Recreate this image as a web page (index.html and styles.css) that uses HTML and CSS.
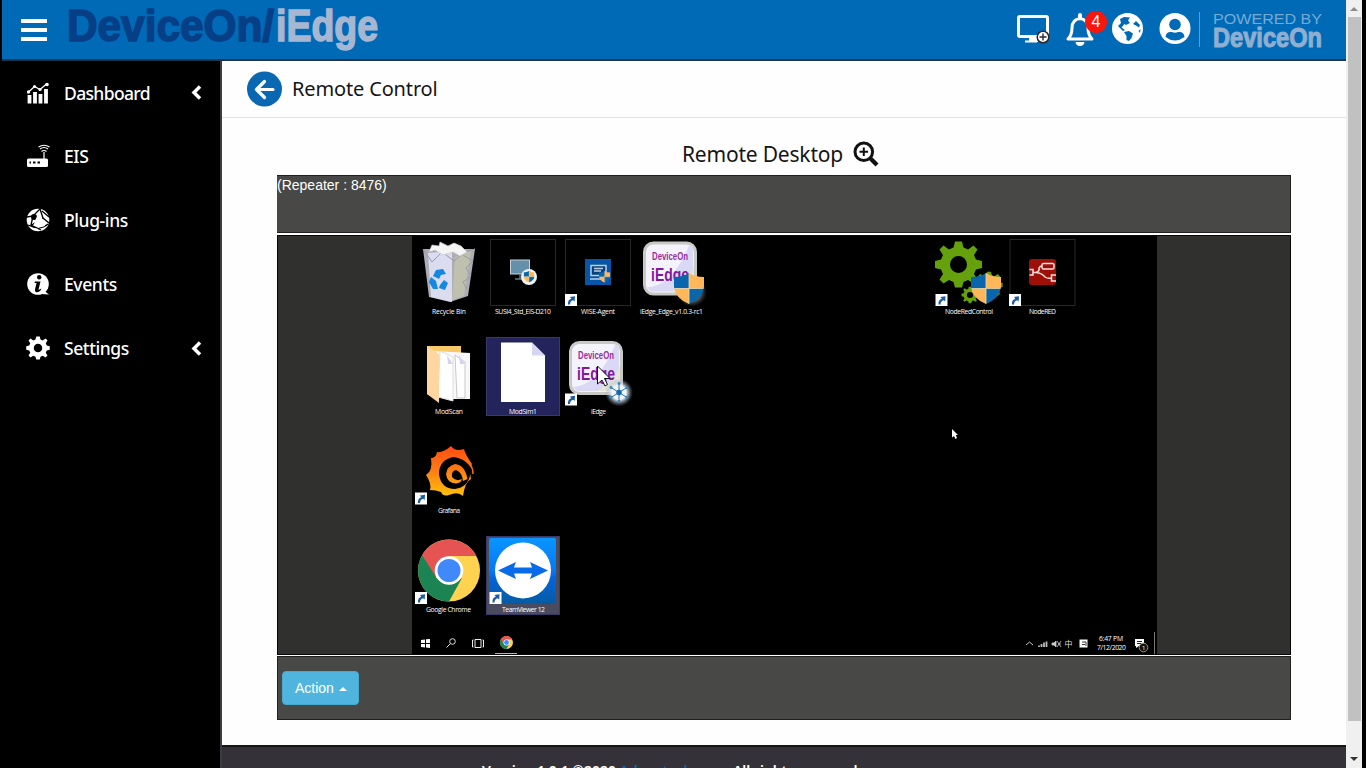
FILE: index.html
```html
<!DOCTYPE html>
<html lang="en">
<head>
<meta charset="utf-8">
<title>DeviceOn/iEdge - Remote Control</title>
<link rel="stylesheet" href="styles.css">
</head>
<body>
<svg class="defs" width="0" height="0" aria-hidden="true">
  <defs>
    <clipPath id="shieldclip"><path d="M0 4Q9 4 15 0Q21 4 30 4V14Q29 25 15 31Q1 25 0 14Z"/></clipPath>
    <g id="shield"><g clip-path="url(#shieldclip)"><rect width="15" height="15.5" fill="#0966ac"/><rect x="15" width="15" height="15.5" fill="#ffb75a"/><rect y="15.5" width="15" height="16" fill="#ffb75a"/><rect x="15" y="15.5" width="15" height="16" fill="#0966ac"/><path d="M15 0V31M0 15.5H30" stroke="#e9d9b0" stroke-width=".8"/></g></g>
    <g id="shortcut"><rect width="12" height="12" fill="#fff"/><path d="M3 10.5Q2.500 6 6.300 4.800L5 3L10 2.200L9.700 7.500L8.200 6.200Q5 7 5 10.500Z" fill="#1b5ba5"/></g>
    <g id="chrome"><circle r="31" fill="#ffd34f"/><path d="M-26.800 -15.500A31 31 0 0 1 26.800 -15.500L27.500 -14.500H0L-14 8Z" fill="#e55353"/><path d="M-26.800 -15.500A31 31 0 0 0 0 31L13 7.500L0 14L-12.500 7.500Z" fill="#1c8452"/><circle r="14.300" fill="#fff"/><circle r="11.500" fill="#4089fb"/></g>
    <linearGradient id="fire" gradientUnits="userSpaceOnUse" x1="0" y1="10" x2="0" y2="61"><stop offset="0" stop-color="#ff4a12"/><stop offset=".5" stop-color="#fc8014"/><stop offset="1" stop-color="#ffc40c"/></linearGradient>
    <linearGradient id="tv" x1="0" y1="0" x2="0" y2="1"><stop offset="0" stop-color="#0995ff"/><stop offset=".5" stop-color="#0678f4"/><stop offset=".61" stop-color="#0564d8"/><stop offset="1" stop-color="#065ba2"/></linearGradient>
    <radialGradient id="glow"><stop offset=".5" stop-color="#f0f6fa"/><stop offset="1" stop-color="#8795aa" stop-opacity="0"/></radialGradient>
    <g id="iedge"><rect x="1.500" y="1.500" width="51" height="51" rx="9" fill="#f4f3fc" stroke="#c8c8c4" stroke-width="3"/><path d="M4 46Q30 44 46 4H50V50H8Z" fill="#d9d9f6"/><path d="M28 50Q46 40 51 24V50Z" fill="#e7e5d8"/><text x="9" y="18" textLength="36" lengthAdjust="spacingAndGlyphs" class="tile-small">DeviceOn</text><text x="8" y="39" textLength="38" lengthAdjust="spacingAndGlyphs" class="tile-large">iEdge</text></g>
    <path id="cog" d="M-3.500 -23H3.500L5 -17L9.500 -15L15 -19L19 -15L15.500 -9.500L17.500 -5L23.500 -3.500V3.500L17.500 5L15.500 9.500L19 15L15 19L9.500 15.500L5 17.500L3.500 23H-3.500L-5 17.500L-9.500 15.500L-15 19L-19 15L-15.500 9.500L-17.500 5L-23.500 3.500V-3.500L-17.500 -5L-15.500 -9.500L-19 -15L-15 -19L-9.500 -15L-5 -17ZM0 -8.500A8.500 8.500 0 1 0 0 8.500A8.500 8.500 0 1 0 0 -8.500Z" fill-rule="evenodd"/>
  </defs>
</svg>
<div class="app">
  <div class="page">
    <header class="topbar">
      <svg class="menu" width="26" height="24" viewBox="0 0 26 24"><path d="M0 3H26M0 12H26M0 21H26" stroke="#fff" stroke-width="4"/></svg>
      <svg class="logo" width="316" height="59" viewBox="0 0 316 59"><text x="1" y="41" textLength="207" lengthAdjust="spacingAndGlyphs" fill="#063f86">DeviceOn/</text><text x="210" y="41" textLength="102" lengthAdjust="spacingAndGlyphs" fill="#a7b6d1">iEdge</text></svg>
      <nav class="tools">
        <svg width="33" height="32" viewBox="0 0 33 32"><path d="M8 28.500H20M13 24H20V28H13Z" stroke="#fff" stroke-width="2" fill="#fff"/><rect x="1.500" y="3.500" width="29" height="20" rx="1.500" fill="none" stroke="#fff" stroke-width="3"/><circle cx="26" cy="24" r="5.800" fill="#fff" stroke="#282832" stroke-width="1.500"/><path d="M22.500 24H29.500M26 20.500V27.500" stroke="#282832" stroke-width="1.400"/></svg>
        <div class="bell">
          <svg width="28" height="34" viewBox="0 0 28 34"><path d="M14 2V5" stroke="#fff" stroke-width="4" stroke-linecap="round"/><path d="M2 26H26Q22 22 22 15Q22 6.500 14 5.500Q6 6.500 6 15Q6 22 2 26Z" fill="none" stroke="#fff" stroke-width="3" stroke-linejoin="round"/><path d="M9.500 29H18.500Q18 33 14 33Q10 33 9.500 29Z" fill="#fff"/></svg>
          <span class="badge">4</span>
        </div>
        <svg width="32" height="32" viewBox="0 0 32 32"><circle cx="15.500" cy="15.500" r="15.500" fill="#fff"/><path d="M8 6L12 4L18 4.500L16 7.500L18 10L14 12L12.500 11L9.500 14.500L13 17L11 18L6 13L9 10ZM24 8L28 12L27 14.500L24 12.500L21 11ZM12 19L17 18L21 20.500L19.500 25L17 28L14.500 27L14.500 23ZM26.500 18L28.500 16L28 20Z" fill="#006ab7"/></svg>
        <svg width="32" height="32" viewBox="0 0 32 32"><circle cx="16" cy="15.500" r="15.500" fill="#fff"/><circle cx="16" cy="11.500" r="5.800" fill="#006ab7"/><path d="M6.500 24Q7 19 11.500 19H13Q16 20.500 19 19H20.500Q25 19 25.500 24Q16 31 6.500 24Z" fill="#006ab7"/></svg>
      </nav>
      <svg class="powered" width="128" height="42" viewBox="0 0 128 42"><path d="M.5 1V36" stroke="#5c9fcd"/><text class="by" x="14" y="13" textLength="109" lengthAdjust="spacingAndGlyphs">POWERED BY</text><text class="brand" x="14" y="36" textLength="109" lengthAdjust="spacingAndGlyphs">DeviceOn</text></svg>
    </header>
    <div class="body">
      <aside class="sidebar">
        <a class="nav-item dashboard"><svg class="nav-icon" viewBox="0 0 24 24"><path d="M3.500 22.500V14M9 22.500V11M14.500 22.500V13M20 22.500V8" stroke="#fff" stroke-width="3.800"/><path d="M2 11.500L8.500 5.500L14 8.500L20.500 3" fill="none" stroke="#fff" stroke-width="1.300"/><circle cx="2.500" cy="11" r="1.700" fill="#fff"/><circle cx="8.500" cy="5.500" r="1.600" fill="#fff"/><circle cx="14" cy="8.500" r="1.600" fill="#fff"/><circle cx="21" cy="3.500" r="1.800" fill="#fff"/></svg><span>Dashboard</span><svg class="chevron" width="11" height="15" viewBox="0 0 11 15"><path d="M9 1.500L3 7.500L9 13.500" fill="none" stroke="#fff" stroke-width="3.500"/></svg></a>
        <a class="nav-item"><svg class="nav-icon" viewBox="0 0 24 24"><rect x="1" y="14.500" width="21" height="8.500" rx="1.500" fill="#fff"/><path d="M18 15V8M15.500 7.500Q18 5.500 20.500 7.500M14 5Q18 2 22 5M12.500 3Q18 -.5 23.500 3" fill="none" stroke="#fff" stroke-width="1.200"/><path d="M3.500 18.500H5M7 18.500H9.500M11.500 18.500H14" stroke="#000" stroke-width="2"/></svg><span>EIS</span></a>
        <a class="nav-item"><svg class="nav-icon" viewBox="0 0 24 24"><circle cx="12" cy="12" r="11.300" fill="#fff"/><path d="M1 9L7 8L14 1M14 1L17 10L23 15M7 8L5 17L15 22M2 17Q14 23 22 16M16 3L23 9M4 18L17 10" fill="none" stroke="#000" stroke-width="1.300"/><circle cx="8" cy="9" r="3" fill="#000"/><path d="M8 16L11 8L16 10L19 18L12 20Z" fill="#fff"/></svg><span>Plug-ins</span></a>
        <a class="nav-item"><svg class="nav-icon" viewBox="0 0 24 24"><circle cx="12" cy="12" r="10.800" fill="#fff"/><path d="M17 18L23 22.500L15 22Z" fill="#fff"/><circle cx="13.200" cy="5.200" r="2.200" fill="#000"/><path d="M9 9.500H14.500L12.500 17.500Q13 18 15.500 16.500Q14 20.500 10.500 20.300Q8.500 20 9 17.500L10.500 11H8.500Z" fill="#000"/></svg><span>Events</span></a>
        <a class="nav-item"><svg class="nav-icon" viewBox="-24 -24 48 48"><use href="#cog" fill="#fff"/></svg><span>Settings</span><svg class="chevron" width="11" height="15" viewBox="0 0 11 15"><path d="M9 1.500L3 7.500L9 13.500" fill="none" stroke="#fff" stroke-width="3.500"/></svg></a>
      </aside>
      <main class="main">
        <div class="titlebar">
          <svg width="36" height="36" viewBox="0 0 36 36"><circle cx="17.500" cy="18" r="17.500" fill="#0a68b2"/><path d="M26 18.500H10M17.500 10.500L9.500 18.500L17.500 26.500" fill="none" stroke="#fff" stroke-width="3.200" stroke-linecap="round" stroke-linejoin="round"/></svg>
          <h1>Remote Control</h1>
        </div>
        <section class="content">
          <div class="heading"><h2>Remote Desktop</h2><svg width="26" height="26" viewBox="0 0 26 26"><circle cx="10.800" cy="10.800" r="8.800" fill="none" stroke="#111" stroke-width="3"/><path d="M17.500 17.500L24 24" stroke="#111" stroke-width="4.200"/><path d="M6.500 10.800H15.100M10.800 6.500V15.100" stroke="#111" stroke-width="2"/></svg></div>
          <div class="viewer">
            <div class="status">(Repeater : 8476)</div>
            <div class="screen">
              <div class="desktop">
                <div class="icons">
                  <svg class="cell c1 r1" viewBox="0 0 74 79"><path d="M11 12L63 12L56 59L38 65L17 60Z" fill="#adadb7"/><path d="M16 16L40 14L40 65L19 60Z" fill="#dcdcf0"/><path d="M43 20L59 14L52 59L40 63Z" fill="#bfc0ad"/><path d="M51 18L61 24L54 31L59 39L51 45L55 52M11 12L20 25L30 15L42 24L53 15L63 12" fill="none" stroke="#9b9ba5" stroke-width="1"/><path d="M17 15L20 8L27 9L28 5L36 9L42 6L49 9L55 15L48 19L41 15L31 18L23 13Z" fill="#f5f5f5" stroke="#c7c7cf" stroke-width=".7"/><path d="M21 39L24 33L31 32L34 37L29 38L27 42ZM17 45L19 40L24 44L26 52L21 52ZM28 48L32 43L36 46L33 53L27 51Z" fill="#1688df"/><text x="20" y="77" textLength="34">Recycle Bin</text></svg>
                  <svg class="cell c2 r1" viewBox="0 0 74 79"><rect class="frame" x="4.500" y="2.500" width="65" height="66"/><rect x="24.500" y="23" width="19" height="14" fill="#6590ab" stroke="#c4d0d6"/><path d="M34 38V42M29 42H38" stroke="#678" stroke-width="1.500"/><circle cx="43" cy="40" r="8" fill="#eef2f3"/><use href="#shield" transform="translate(37.500 34) scale(.37)"/><text x="9" y="77" textLength="56">SUSI4_Std_EIS-D210</text></svg>
                  <svg class="cell c3 r1" viewBox="0 0 74 79"><rect class="frame" x="4.500" y="2.500" width="65" height="66"/><rect x="24" y="22" width="26" height="26" fill="#0854a6"/><rect x="30" y="28.500" width="15" height="10" fill="#07407d" stroke="#b9d1e8" stroke-width="1.500"/><path d="M33 31.500H42M33 34H40M29 42H43" stroke="#b9d1e8" stroke-width="1.300"/><use href="#shield" transform="translate(38 34) scale(.38)"/><use href="#shortcut" x="4" y="57"/><text x="20" y="77" textLength="34">WISE-Agent</text></svg>
                  <svg class="cell c4 r1" viewBox="0 0 74 79"><use href="#iedge" x="8" y="4.500"/><circle cx="57" cy="55" r="15" fill="url(#glow)" opacity=".5"/><use href="#shield" x="39" y="36"/><text x="5" y="77" textLength="63">iEdge_Edge_v1.0.3-rc1</text></svg>
                  <svg class="cell c8 r1" viewBox="0 0 74 79"><use href="#cog" transform="translate(26.500 27.500)" fill="#64a10c"/><use href="#cog" transform="translate(38 58) scale(.36)" fill="#64a10c"/><use href="#cog" transform="translate(57 48) scale(.58)" fill="#64a10c"/><use href="#shield" x="39" y="36"/><use href="#shortcut" x="3.500" y="57"/><text x="13" y="77" textLength="48">NodeRedControl</text></svg>
                  <svg class="cell c9 r1" viewBox="0 0 74 79"><rect class="frame" x="4" y="2.500" width="65" height="66"/><rect x="23" y="22" width="27" height="26" rx="3" fill="#9c1008"/><rect x="36" y="26.500" width="12" height="5.500" rx="1.500" class="wire"/><path d="M23.500 32.500H27V38H23.500M27 35.500H30Q34 34 33 31Q34 29 36 29M30 35.500Q36 36 39 40Q42 42 45 41M50 38H45.500V44H50" class="wire"/><use href="#shortcut" x="3" y="57"/><text x="23" y="77" textLength="27">NodeRED</text></svg>
                  <svg class="cell c1 r2" viewBox="0 0 74 79"><path d="M15 9H49V60H20L15 57Z" fill="#f8c969"/><path d="M22 14L58 16V62H31Z" fill="#f8f8fb"/><path d="M28 14L41 20V64L26 60Z" fill="#fff" stroke="#ddd"/><path d="M43 18L53 25V61H45Z" fill="#fff" stroke="#bbb" stroke-width=".8"/><path d="M35 18L41 27H36ZM47 18L53 27H48Z" fill="#d5d3ef"/><path d="M15 9L27 17V66L15 57Z" fill="#ffd6a0"/><text x="23" y="77" textLength="28">ModScan</text></svg>
                  <svg class="cell selected c2 r2" viewBox="0 0 74 79"><path d="M15 5.500H46L59 18.500V65H15Z" fill="#fff"/><path d="M46 5.500L59 18.500H46Z" fill="#d7d5f0"/><text x="23" y="77" textLength="28">ModSim1</text></svg>
                  <svg class="cell c3 r2" viewBox="0 0 74 79"><use href="#iedge" x="8" y="4"/><circle cx="58" cy="55.500" r="14" fill="url(#glow)"/><path d="M58 46.500V64.500M50 50.500L66 60.500M50 60.500L66 50.500" stroke="#2470af" stroke-width="1"/><circle cx="58" cy="55.500" r="2.700" fill="#1467ae"/><g fill="#3e86bc"><circle cx="58" cy="46.500" r="1.400"/><circle cx="58" cy="64.500" r="1.400"/><circle cx="50" cy="50.500" r="1.400"/><circle cx="66" cy="60.500" r="1.400"/><circle cx="50" cy="60.500" r="1.400"/><circle cx="66" cy="50.500" r="1.400"/></g><use href="#shortcut" x="4" y="56.500"/><path d="M36.500 29V47L41 43L44 49L46.500 47.500L43.500 41.500H49Z" fill="#fff" stroke="#111"/><text x="30" y="77" textLength="15">iEdge</text></svg>
                  <svg class="cell c1 r3" viewBox="0 0 74 79"><path d="M25 16Q31 17 39 10Q43 16 52 13Q53 18 60 28Q57 32 59 43Q53 46 51 60Q46 55 37 59Q31 61 29 56Q24 54 18 54Q20 48 14 39Q21 35 19 22Q24 22 25 16Z" fill="url(#fire)"/><path d="M62 37Q55 22 41 21Q27 24 27 38Q29 53 43 53Q56 51 58 39Z" fill="#000"/><path d="M55.500 43Q53 29 43 28Q35 30 34 38Q35 47 44 47.500Q49 47 50 43Q44 46 40 41Q39 35 44 34Q50 36 51 45Z" fill="url(#fire)"/><path d="M54 24Q61 29 61 38" fill="none" stroke="#fb6f14" stroke-width="1.500"/><use href="#shortcut" x="3" y="56.500"/><text x="26" y="76.500" textLength="22">Grafana</text></svg>
                  <svg class="cell c1 r4" viewBox="0 0 74 79"><use href="#chrome" transform="translate(37 34.500)"/><use href="#shortcut" x="3" y="56"/><text x="14" y="76" textLength="45">Google Chrome</text></svg>
                  <svg class="cell selected gray c2 r4" viewBox="0 0 74 79"><rect x="3" y="2" width="67" height="66" rx="2" fill="url(#tv)"/><circle cx="37" cy="34.500" r="28" fill="#fff"/><path d="M12 34.500L30 26L28 31.500H46L44 26L62 34.500L44 43L46 37.500H28L30 43Z" fill="#0a6bea"/><use href="#shortcut" x="3.500" y="56"/><text x="16" y="76" textLength="43">TeamViewer 12</text></svg>
                </div>
                <svg class="cursor" width="8" height="12" viewBox="0 0 8 12"><path d="M1 1V9.500L3 8L4.500 11L6 10L4.800 7H7Z" fill="#fff"/></svg>
                <div class="taskbar">
                  <svg width="9" height="9" viewBox="0 0 9 9"><path d="M0 1L4 .5V4H0ZM5 .3L9 0V4H5ZM0 5H4V8.500L0 8ZM5 5H9V9L5 8.500Z" fill="#fff"/></svg>
                  <svg width="10" height="10" viewBox="0 0 10 10"><circle cx="6.500" cy="3.500" r="2.800" fill="none" stroke="#ddd"/><path d="M4.500 5.500L.5 9.500" stroke="#ddd"/></svg>
                  <svg width="12" height="9" viewBox="0 0 12 9"><path d="M3 .5H9V8.500H3ZM1.500 1H.5V8H1.500M10.500 1H11.500V8H10.500" fill="none" stroke="#eee"/></svg>
                  <span class="running"><svg width="13" height="13" viewBox="-31 -31 62 62"><use href="#chrome"/></svg></span>
                  <svg class="tray" width="130" height="22" viewBox="0 0 130 22"><path d="M1 13L4.500 10L8 13" fill="none" stroke="#ccc"/><path d="M14 15V13.500M16.500 15V12M19 15V10.500M21.500 15V9.500" stroke="#bbb" stroke-width="1.800"/><path d="M27 11H29L31 9V15L29 13H27ZM32 9L36 15M36 9L32 15M33 12H36" stroke="#ccc" stroke-width=".8" fill="#ccc"/><text x="39.500" y="14.500" class="ime">中</text><rect x="54.500" y="7.500" width="8" height="8" fill="#fff"/><path d="M57 10H61V14M57 12.500H60" stroke="#333" fill="none"/><text x="74" y="8.500" textLength="24">6:47 PM</text><text x="72" y="18" textLength="29">7/12/2020</text><path d="M110 7H119V14H114L111 16V14H110Z" fill="#fff"/><path d="M112 9.500H117M112 11.500H116" stroke="#222"/><circle cx="118.500" cy="15.500" r="4.300" fill="#111" stroke="#999966"/><text x="117" y="18" class="count">1</text><path d="M129.500 0V22" stroke="#777"/></svg>
                </div>
              </div>
            </div>
            <div class="controls"><button class="action">Action <i class="caret"></i></button></div>
          </div>
        </section>
        <footer class="footer">Version 1.0.1 ©2020 <a>Advantech.com</a>. All rights reserved</footer>
      </main>
    </div>
  </div>
  <div class="scrollbar"><i class="up"></i><div class="thumb"></div><i class="down"></i></div>
</div>
</body>
</html>
```
FILE: styles.css
```css
* { box-sizing: border-box; }
body { margin: 0; width: 1366px; height: 768px; overflow: hidden; background: #000; font-family: "Noto Sans", "Open Sans", sans-serif; }
svg { display: block; flex: none; }
.defs { position: absolute; }
.app { display: flex; height: 768px; padding: 0 4px 0 2px; }
.page { display: flex; flex-direction: column; width: 1344px; height: 768px; }
.topbar { display: flex; height: 61px; padding-left: 19px; background: #006ab7; border-bottom: 2px solid #1f344b; flex: none; }
.menu { margin-top: 18px; }
.logo { margin-left: 19px; font: 700 45px "Liberation Sans", Arial, sans-serif; }
.logo text { stroke-width: 1.600px; }
.logo text:first-child { stroke: #063f86; }
.logo text:last-child { stroke: #a7b6d1; }
.tools { display: flex; gap: 15px; margin: 13px 0 0 auto; }
.tools > svg:first-child { margin-right: 1px; }
.bell { position: relative; width: 31px; }
.badge { position: absolute; left: 19px; top: -2px; width: 22px; height: 22px; border-radius: 50%; background: #fb160d; color: #fff; font: 16px/22px "Liberation Sans", sans-serif; text-align: center; }
.powered { margin: 11px 19px 0 8px; }
.powered text { fill: #8faed0; font-family: "Liberation Sans", Arial, sans-serif; }
.powered .by { font-size: 15px; fill: #75aad4; }
.powered .brand { font-size: 28px; font-weight: 700; stroke: #8faed0; stroke-width: 1.100px; }
.body { display: flex; flex: 1; min-height: 0; }
.sidebar { width: 220px; background: #000; border-right: 2px solid #3c3c3f; flex: none; }
.nav-item { display: flex; align-items: center; height: 64px; padding: 0 18px 0 24px; color: #fff; font-size: 17.500px; font-weight: 500; line-height: 24px; letter-spacing: -.4px; }
.dashboard { height: 63px; letter-spacing: -.65px; }
.nav-icon { width: 24px; height: 24px; margin-right: 14px; }
.chevron { margin-left: auto; }
.main { display: flex; flex-direction: column; flex: 1; background: #fefefe; min-width: 0; }
.titlebar { display: flex; align-items: center; gap: 9px; height: 57px; padding-left: 25px; border-bottom: 1px solid #e2e2e2; flex: none; }
h1, h2 { margin: 0; color: #151515; font-weight: 400; font-size: 20px; line-height: 28px; letter-spacing: -.15px; }
.content { padding: 22px 55px 24px; height: 627px; flex: none; }
.heading { display: flex; align-items: center; gap: 10px; height: 28px; padding-left: 405px; }
h2 { font-size: 21px; letter-spacing: -.2px; }
.viewer { margin-top: 7px; font-family: "Liberation Sans", Arial, sans-serif; }
.status { height: 58px; border: 1px solid #20201e; border-left-width: 0; background: #484846; color: #fff; font-size: 14px; line-height: 19px; }
.screen { display: flex; height: 420px; margin: 2px 0 1px; padding-left: 134px; border: 1px solid #080808; background: #30302e; }
.desktop { position: relative; display: flex; flex-direction: column; width: 745px; background: #000; }
.icons { display: grid; grid-template-columns: repeat(10, 74.300px); grid-template-rows: repeat(4, 99.500px); height: 396px; padding-top: 1px; }
.cell { width: 74px; height: 79px; }
.cell text, .tray text { fill: #fff; font: 6.800px "Open Sans", sans-serif; }
.cell text.tile-small, .tile-small { fill: #9a2ba0; font: 700 11px "Liberation Sans", sans-serif; }
.cell text.tile-large, .tile-large { fill: #84189b; font: 700 18px "Liberation Sans", sans-serif; }
.frame { fill: none; stroke: #272727; }
.wire { fill: none; stroke: #f5dddd; stroke-width: 1.500px; }
.selected { background: #22245b; outline: 1px solid #383966; outline-offset: -1px; }
.gray { background: #4b4b60; }
.c1 { grid-column: 1; } .c2 { grid-column: 2; } .c3 { grid-column: 3; } .c4 { grid-column: 4; } .c8 { grid-column: 8; } .c9 { grid-column: 9; }
.r1 { grid-row: 1; } .r2 { grid-row: 2; } .r3 { grid-row: 3; } .r4 { grid-row: 4; }
.cursor { position: absolute; left: 539px; top: 192px; }
.taskbar { display: flex; align-items: center; gap: 16px; height: 22px; padding: 0 2px 0 9px; }
.running { display: flex; align-items: center; justify-content: center; width: 22px; height: 22px; margin-left: -5px; border-bottom: 1px solid #9db5dd; }
.tray { margin-left: auto; }
.tray text.ime { font: 8px "Noto Sans CJK TC", sans-serif; fill: #ddd; }
.tray text.count { font-size: 6px; }
.controls { height: 64px; padding: 14px 4px; border: 1px solid #20201e; background: #484846; }
.action { display: flex; align-items: center; gap: 5px; width: 77px; height: 34px; padding: 0 12px; border: 1px solid #46a9ce; border-radius: 4px; background: #50b5de; color: #fff; font: 14px "Liberation Sans", sans-serif; }
.caret { border: 4px solid transparent; border-top: 0; border-bottom-color: #fff; margin-top: 2px; }
.footer { flex: 1; overflow: hidden; border-top: 2px solid #161619; background: #343238; color: #fff; font-size: 14px; font-weight: 600; line-height: 20px; padding: 14px 0 0 260px; white-space: nowrap; }
.footer a { color: #0b69b0; }
.scrollbar { display: flex; flex-direction: column; align-items: center; width: 16px; height: 768px; background: #f0f0f0; }
.thumb { width: 13px; height: 704px; background: #c1c1c1; margin-top: 6px; }
.up, .down { border: 4px solid transparent; }
.up { border-top: 0; border-bottom-color: #8c8c8c; margin-top: 7px; }
.down { border-bottom: 0; border-top-color: #333; margin-top: 36px; }
```
